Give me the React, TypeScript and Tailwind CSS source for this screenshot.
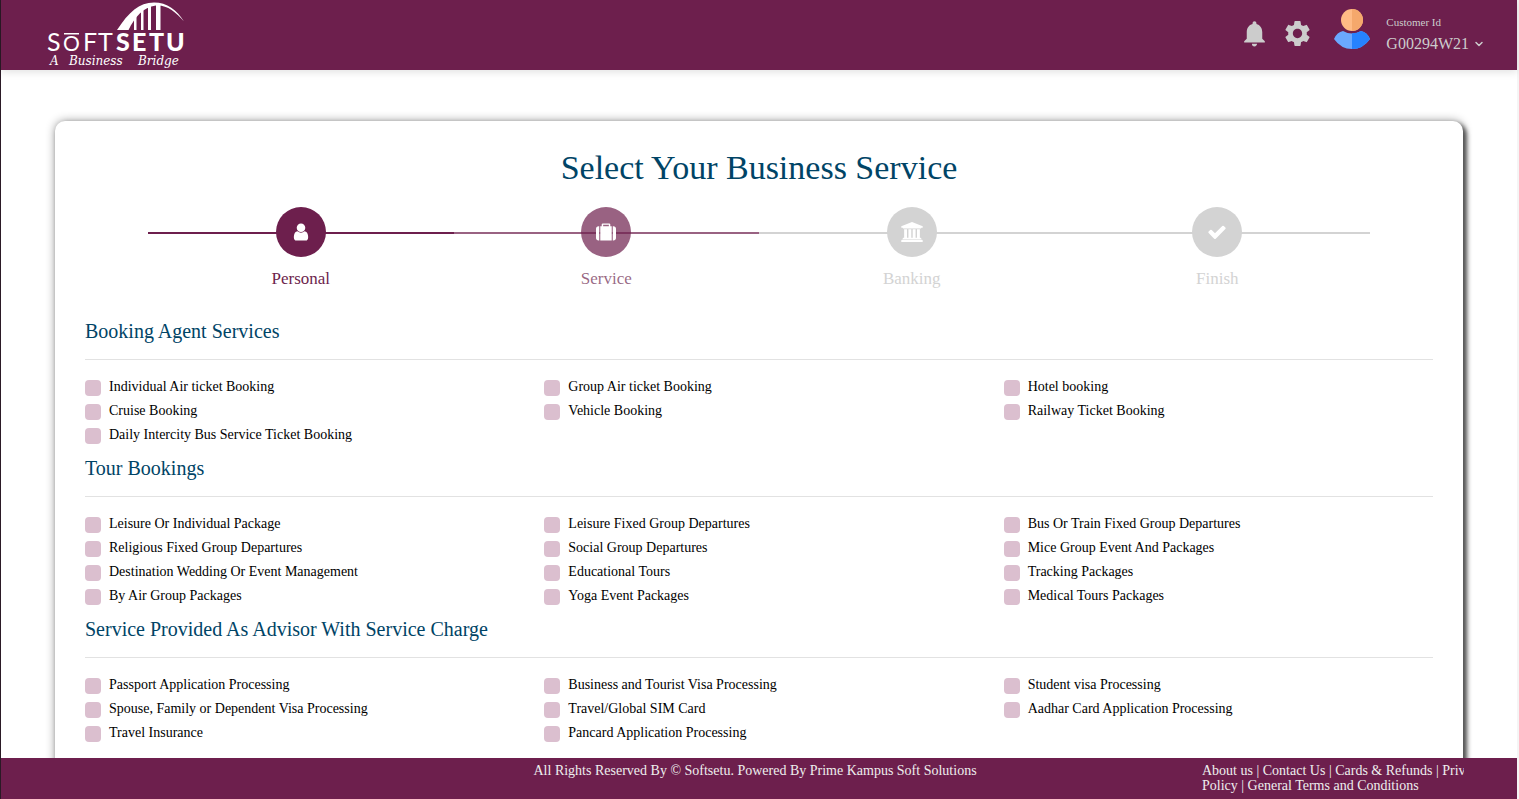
import { MdNotifications, MdSettings } from "react-icons/md";
import { FiChevronDown } from "react-icons/fi";

type Section = { title: string; items: string[] };

const sections: Section[] = [
  {
    title: "Booking Agent Services",
    items: [
      "Individual Air ticket Booking",
      "Group Air ticket Booking",
      "Hotel booking",
      "Cruise Booking",
      "Vehicle Booking",
      "Railway Ticket Booking",
      "Daily Intercity Bus Service Ticket Booking",
    ],
  },
  {
    title: "Tour Bookings",
    items: [
      "Leisure Or Individual Package",
      "Leisure Fixed Group Departures",
      "Bus Or Train Fixed Group Departures",
      "Religious Fixed Group Departures",
      "Social Group Departures",
      "Mice Group Event And Packages",
      "Destination Wedding Or Event Management",
      "Educational Tours",
      "Tracking Packages",
      "By Air Group Packages",
      "Yoga Event Packages",
      "Medical Tours Packages",
    ],
  },
  {
    title: "Service Provided As Advisor With Service Charge",
    items: [
      "Passport Application Processing",
      "Business and Tourist Visa Processing",
      "Student visa Processing",
      "Spouse, Family or Dependent Visa Processing",
      "Travel/Global SIM Card",
      "Aadhar Card Application Processing",
      "Travel Insurance",
      "Pancard Application Processing",
    ],
  },
  { title: "Catering Services", items: [] },
];

const steps = [
  {
    label: "Personal",
    fill: "bg-[#6d1f4d]",
    text: "text-[#6d1f4d]",
    box: "0 0 1792 1792",
    path: "M1536 1399q0 109-62.5 187t-150.5 78h-854q-88 0-150.5-78t-62.5-187q0-85 8.5-160.5t31.5-152 58.5-131 94-89 134.5-34.5q131 128 313 128t313-128q76 0 134.5 34.5t94 89 58.5 131 31.5 152 8.5 160.5zm-256-887q0 159-112.5 271.5t-271.5 112.5-271.5-112.5-112.5-271.5 112.5-271.5 271.5-112.5 271.5 112.5 112.5 271.5z",
  },
  {
    label: "Service",
    fill: "bg-[#6d1f4d]/70",
    text: "text-[#6d1f4d]/70",
    box: "0 0 1792 1792",
    path: "M640 384h512v-128h-512v128zm-352 0v1280h-64q-92 0-158-66t-66-158v-832q0-92 66-158t158-66h64zm1120 0v1280h-1024v-1280h128v-160q0-40 28-68t68-28h576q40 0 68 28t28 68v160h128zm384 224v832q0 92-66 158t-158 66h-64v-1280h64q92 0 158 66t66 158z",
  },
  {
    label: "Banking",
    fill: "bg-[#d3d3d3]",
    text: "text-[#d3d3d3]",
    box: "0 0 1920 1792",
    path: "M960 0l960 384v128h-128q0 26-20.5 45t-48.5 19h-1526q-28 0-48.5-19t-20.5-45h-128v-128zm-704 640h256v768h128v-768h256v768h128v-768h256v768h128v-768h256v768h59q28 0 48.5 19t20.5 45v64h-1664v-64q0-26 20.5-45t48.5-19h59v-768zm1595 960q28 0 48.5 19t20.5 45v128h-1920v-128q0-26 20.5-45t48.5-19h1782z",
  },
  {
    label: "Finish",
    fill: "bg-[#d3d3d3]",
    text: "text-[#d3d3d3]",
    box: "0 0 1792 1792",
    path: "M1671 566q0 40-28 68l-724 724-136 136q-28 28-68 28t-68-28l-136-136-362-362q-28-28-28-68t28-68l136-136q28-28 68-28t68 28l294 295 656-657q28-28 68-28t68 28l136 136q28 28 28 68z",
  },
];

function Logo() {
  return (
    <svg viewBox="0 0 144 70" className="h-[70px] w-36" fill="#fff" role="img" aria-label="Softsetu">
      <path d="M72 30C84 12 94 2.500 109 2.500C122 2.500 132 10 139 21.500C131 11.500 121 4.500 111 5.500C98 7 90 17 83.500 30Z" />
      <path d="M89 14h2.500v16H89zM96 9h2.500v21H96zM103 6h3v24h-3zM111 4.500h4.500V30H111z" />
      <g fontFamily="Lato, sans-serif" fontSize="25">
        <text x="2" y="51">S</text>
        <text x="18" y="51" fontSize="21">O</text>
        <text x="38" y="51">F</text>
        <text x="53" y="51">T</text>
        <g fontWeight="900">
          <text x="71" y="51">S</text>
          <text x="87" y="51">E</text>
          <text x="104" y="51">T</text>
          <text x="121" y="51">U</text>
        </g>
      </g>
      <path d="M19 33h15v1.500H19z" />
      <g fontFamily="'DejaVu Serif', serif" fontSize="12" fontStyle="italic">
        <text x="5" y="65">A</text>
        <text x="24" y="65">Business</text>
        <text x="93" y="65">Bridge</text>
      </g>
    </svg>
  );
}

function Avatar() {
  return (
    <svg viewBox="0 0 36 40" className="h-10 w-9" aria-hidden="true">
      <circle cx="18" cy="11" r="11" fill="#ffbb85" />
      <path d="M18 0a11 11 0 0 1 0 22z" fill="#f5a86c" />
      <path d="M9 22Q18 27 27 22Q33 23 36 30Q29 40 18 40Q7 40 0 30Q3 23 9 22Z" fill="#6aa8ff" />
      <path d="M18 24.300Q23 24.300 27 22Q33 23 36 30Q29 40 18 40Z" fill="#2682ff" />
    </svg>
  );
}

function Stepper() {
  return (
    <ol className="mx-[63px] grid grid-cols-4">
      {steps.map((step) => (
        <li key={step.label} className="grid grid-rows-[50px_auto] justify-items-center">
          <span className={`col-start-1 row-start-1 mt-px h-0.5 w-full self-center ${step.fill}`} />
          <span className={`col-start-1 row-start-1 flex size-[50px] items-center justify-center rounded-full ${step.fill}`}>
            <svg viewBox={step.box} className="h-5 w-[22px]" fill="#fff" aria-hidden="true">
              <path d={step.path} />
            </svg>
          </span>
          <span className={`pt-3 text-[17px] leading-5 ${step.text}`}>{step.label}</span>
        </li>
      ))}
    </ol>
  );
}

export default function App() {
  return (
    <div className="flex h-screen flex-col border-r-2 border-l border-r-[#f5f5f5] border-l-[#2b1a26] bg-white font-['Liberation_Serif',serif] text-black">
      <header className="z-10 flex h-[70px] shrink-0 items-center justify-between bg-[#6d1f4d] pr-8 pl-11 text-[#ccc] shadow-[0_2px_8px_rgba(0,0,0,0.12)]">
        <a href="#"><Logo /></a>
        <div className="flex items-center pb-1">
          <button aria-label="Notifications"><MdNotifications size={31} /></button>
          <button aria-label="Settings" className="ml-3"><MdSettings size={31} /></button>
          <span className="mb-2 ml-[21px]"><Avatar /></span>
          <button className="ml-4 text-left">
            <span className="block text-[11px] leading-[22px]">Customer Id</span>
            <span className="flex items-center gap-1 text-base leading-[22px]">
              G00294W21 <FiChevronDown size={12} strokeWidth={3} />
            </span>
          </button>
        </div>
      </header>

      <main className="min-h-0 flex-1 overflow-y-auto px-[54px] pt-[51px] pb-12 [scrollbar-width:none]">
        <form className="rounded-[10px] bg-white px-[30px] pt-[26px] pb-8 shadow-[0_0_10px_#999,3px_3px_5px_#000]">
          <h1 className="pb-[18px] text-center text-[34px] leading-[42px] text-[#004466]">Select Your Business Service</h1>
          <Stepper />
          <div className="pt-[21px]">
            {sections.map((section) => (
              <section key={section.title}>
                <h2 className="border-b border-[#e2e2e2] pt-2 pb-[15px] text-xl leading-[26px] text-[#004466]">{section.title}</h2>
                <div className="grid grid-cols-3 gap-x-[30px] pt-[15px]">
                  {section.items.map((item) => (
                    <label key={item} className="flex h-6 items-center gap-2 text-sm leading-6">
                      <input type="checkbox" className="mt-0.5 size-4 shrink-0 appearance-none rounded bg-[#dbbfcf] checked:bg-[#6d1f4d]" />
                      {item}
                    </label>
                  ))}
                </div>
              </section>
            ))}
          </div>
        </form>
      </main>

      <footer className="z-10 grid h-[41px] shrink-0 grid-cols-[1fr_438px_1fr] bg-[#6d1f4d] pt-[5px] pr-[53px] pl-10 text-sm leading-[15px] text-[#eee]">
        <p className="col-start-2 text-center whitespace-nowrap">All Rights Reserved By © Softsetu. Powered By Prime Kampus Soft Solutions</p>
        <nav className="w-[262px] justify-self-end overflow-hidden whitespace-nowrap">
          <a href="#">About us</a> | <a href="#">Contact Us</a> | <a href="#">Cards &amp; Refunds</a> |{" "}
          <a href="#">Privacy<br />Policy</a> | <a href="#">General Terms and Conditions</a>
        </nav>
      </footer>
    </div>
  );
}
